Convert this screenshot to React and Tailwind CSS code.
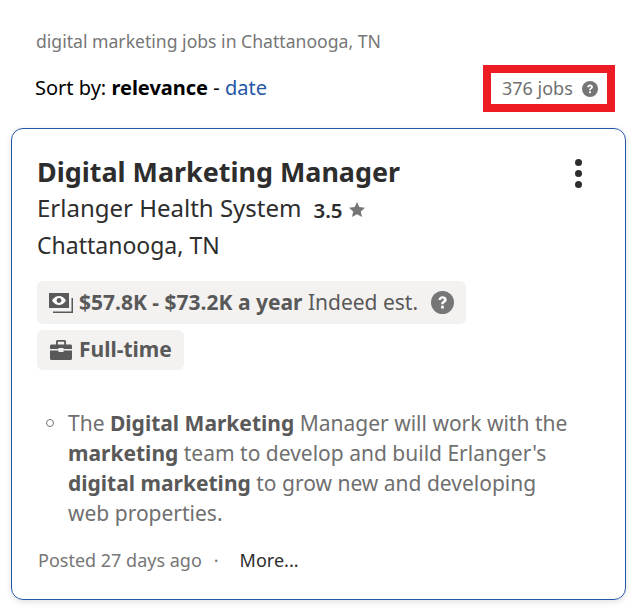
function HelpIcon({ size }) {
  return (
    <svg width={size} height={size} viewBox="0 0 16 16" className="shrink-0">
      <circle cx="8" cy="8" r="8" fill="#767676" />
      <path d="M5.200 6.200C5.300 4.600 6.500 3.600 8.100 3.600c1.700 0 2.800 1 2.800 2.400 0 1-.6 1.600-1.300 2-.6.400-.8.700-.8 1.300H7.100c0-1.100.3-1.600 1-2.100.5-.3.8-.6.8-1.100 0-.5-.4-.8-.9-.8-.6 0-1 .3-1 .9H5.200z" fill="#fff" />
      <rect x="7.100" y="10.200" width="1.800" height="2" fill="#fff" />
    </svg>
  );
}

function MoneyIcon() {
  return (
    <svg width="25" height="20" viewBox="0 0 25 20" className="shrink-0">
      <rect x="0" y="0" width="20" height="15" fill="#595959" />
      <path d="M3 7.500C5 4.300 7.500 3 10 3s5 1.300 7 4.500C15 10.700 12.500 12 10 12S5 10.700 3 7.500z" fill="#fff" />
      <circle cx="10" cy="7.500" r="2.400" fill="#595959" />
      <path d="M22.500 5H24v15H4v-1.500h18.500z" fill="#595959" />
    </svg>
  );
}

function BriefcaseIcon() {
  return (
    <svg width="22" height="20" viewBox="0 0 22 20" className="shrink-0">
      <path fillRule="evenodd" d="M6 5V1.500C6 .7 6.700 0 7.500 0h7c.8 0 1.500.7 1.500 1.500V5h-1.800V1.800H7.800V5z" fill="#595959" />
      <path d="M0 6c0-.8.7-1.500 1.500-1.500h19c.8 0 1.500.7 1.500 1.500v3h-8.500V8h-5v1H0z" fill="#595959" />
      <path d="M0 10.500h8.500v1.500h5v-1.500H22v8c0 .8-.7 1.500-1.500 1.500h-19C.7 20 0 19.300 0 18.500z" fill="#595959" />
    </svg>
  );
}

function StarIcon() {
  return (
    <svg width="16" height="15" viewBox="0 0 16 15" className="shrink-0 ml-[6px] mt-[3px]">
      <polygon points="8,0 10.300,5 16,5.700 11.800,9.500 13,15 8,12.200 3,15 4.200,9.500 0,5.700 5.700,5" fill="#767676" />
    </svg>
  );
}

export default function App() {
  return (
    <div className="w-[638px] h-[610px] overflow-hidden bg-white font-['Noto_Sans',sans-serif]">
      <div className="pl-[36px] pt-[29px] text-[17.6px] leading-[24px] text-[#767676]">
        digital marketing jobs in Chattanooga, TN
      </div>

      <div className="flex items-center justify-between pl-[35px] pr-[23px] mt-[12px]">
        <div className="text-[20px] leading-[28px] -mt-[2px] text-black">
          Sort by: <b>relevance</b> - <span className="text-[#2557a7]">date</span>
        </div>
        <div className="flex items-center gap-[9px] w-[132px] h-[47px] border-[8px] border-[#ed1c24] pl-[11px] text-[#6f6f6f] text-[18px]">
          376 jobs
          <HelpIcon size={16} />
        </div>
      </div>

      <div className="relative mx-[11px] mt-[16px] w-[615px] h-[472px] border border-[#2557a7] rounded-[12px] shadow-[0_2px_6px_rgba(0,0,0,0.12)] pl-[25px] pt-[25px]">
        <div className="absolute right-[43px] top-[30px] flex flex-col gap-[4px]">
          <span className="w-[7px] h-[7px] rounded-full bg-[#2d2d2d]" />
          <span className="w-[7px] h-[7px] rounded-full bg-[#2d2d2d]" />
          <span className="w-[7px] h-[7px] rounded-full bg-[#2d2d2d]" />
        </div>

        <h2 className="text-[26.9px] leading-[36px] font-bold text-[#2d2d2d]">Digital Marketing Manager</h2>
        <div className="flex items-center h-[36px] text-[24px] leading-[36px] text-[#2d2d2d]">
          Erlanger Health System
          <span className="ml-[12px] mt-[3px] text-[20.5px] leading-[24px] font-semibold text-[#2d2d2d]">3.5</span>
          <StarIcon />
        </div>
        <div className="text-[23px] leading-[36px] mt-[1px] text-[#2d2d2d]">Chattanooga, TN</div>

        <div className="mt-[18px] flex items-center w-[429px] h-[43px] rounded-[6px] bg-[#f3f2f1] pl-[12px] text-[21px] text-[#595959]">
          <MoneyIcon />
          <span className="ml-[5px]"><b>$57.8K - $73.2K a year</b> Indeed est.</span>
          <span className="ml-[13px]"><HelpIcon size={23} /></span>
        </div>
        <div className="mt-[6px] flex items-center gap-[7px] w-[147px] h-[40px] rounded-[6px] bg-[#f3f2f1] pl-[13px] text-[21px] font-bold text-[#595959]">
          <BriefcaseIcon />
          Full-time
        </div>

        <div className="flex mt-[38px] pr-[50px] text-[21px] leading-[30px] text-[#6f6f6f]">
          <span className="mt-[11px] ml-[9px] mr-[14px] w-[8px] h-[8px] shrink-0 rounded-full border border-[#767676]" />
          <p>
            The <b className="text-[#595959]">Digital Marketing</b> Manager will work with the{' '}
            <b className="text-[#595959]">marketing</b> team to develop and build Erlanger's{' '}
            <b className="text-[#595959]">digital marketing</b> to grow new and developing web properties.
          </p>
        </div>

        <div className="flex items-center mt-[18px] pl-[1px] text-[18px] leading-[28px]">
          <span className="text-[#767676]">Posted 27 days ago</span>
          <span className="ml-[12px] text-[#767676]">·</span>
          <span className="ml-[21px] text-[#2d2d2d]">More...</span>
        </div>
      </div>
    </div>
  );
}
